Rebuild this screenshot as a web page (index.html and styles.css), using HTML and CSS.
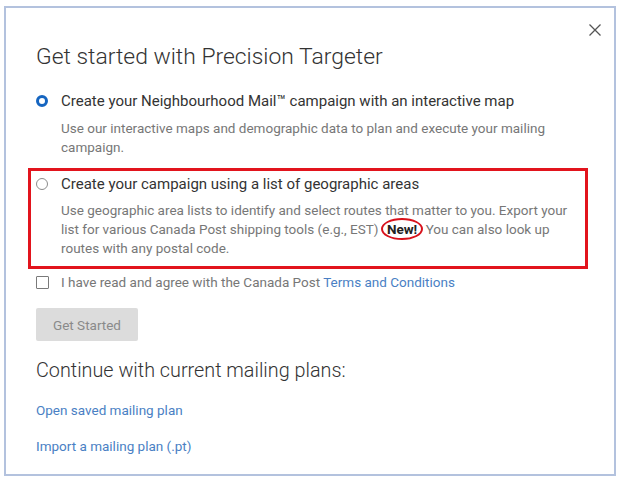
FILE: index.html
```html
<!DOCTYPE html>
<html lang="en">
<head>
<meta charset="utf-8">
<title>Get started with Precision Targeter</title>
<link rel="stylesheet" href="styles.css">
</head>
<body>
<div class="dialog">
  <div class="close-row">
    <button class="close" aria-label="Close">
      <svg width="12" height="12" viewBox="0 0 12 12"><path d="M0.5 0.5 L11.5 11.5 M11.5 0.5 L0.5 11.5" stroke="#555" stroke-width="1.3" fill="none"/></svg>
    </button>
  </div>
  <h1 class="title">Get started with Precision Targeter</h1>

  <div class="option option-first">
    <div class="option-head">
      <span class="radio radio-on"></span>
      <span class="label">Create your Neighbourhood Mail™ campaign with an interactive map</span>
    </div>
    <p class="desc">Use our interactive maps and demographic data to plan and execute your mailing campaign.</p>
  </div>

  <div class="option option-marked">
    <div class="option-head">
      <span class="radio"></span>
      <span class="label">Create your campaign using a list of geographic areas</span>
    </div>
    <p class="desc">Use geographic area lists to identify and select routes that matter to you. Export your list for various Canada Post shipping tools (e.g., EST) <span class="new">New!</span> You can also look up routes with any postal code.</p>
  </div>

  <div class="agree">
    <span class="checkbox"></span>
    <span>I have read and agree with the Canada Post <a class="link" href="#">Terms and Conditions</a></span>
  </div>

  <button class="start">Get Started</button>

  <h2 class="subtitle">Continue with current mailing plans:</h2>
  <a class="link plan-link first-link" href="#">Open saved mailing plan</a>
  <a class="link plan-link" href="#">Import a mailing plan (.pt)</a>
</div>
</body>
</html>
```

FILE: styles.css
```css
html, body {
  margin: 0;
  padding: 0;
  background: #ffffff;
}
body {
  padding: 6px 8px 6px 4px;
  font-family: Roboto, "Liberation Sans", sans-serif;
}
.dialog {
  box-sizing: border-box;
  width: 612px;
  height: 470px;
  border: 2px solid #b3c2de;
  padding: 16px 13px 0 30px;
  display: flex;
  flex-direction: column;
  align-items: flex-start;
}
.close-row {
  align-self: stretch;
  display: flex;
  justify-content: flex-end;
  height: 12px;
}
.close {
  border: 0;
  background: none;
  padding: 0;
  width: 12px;
  height: 12px;
  display: block;
}
.close svg { display: block; }
.title {
  margin: 6px 0 0;
  font-size: 22.9px;
  line-height: 30px;
  font-weight: 300;
  color: #333333;
}
.option {
  display: flex;
  flex-direction: column;
}
.option-first {
  margin-top: 19px;
}
.option-head {
  display: flex;
  align-items: center;
  gap: 13px;
}
.label {
  font-size: 15px;
  line-height: 20px;
  color: #333333;
}
.radio {
  box-sizing: border-box;
  width: 12px;
  height: 12px;
  border-radius: 50%;
  border: 1px solid #8c8c8c;
  flex: none;
}
.radio-on {
  border: 3.5px solid #1565c0;
  background: #ffffff;
}
.desc {
  margin: 8px 0 0 25px;
  font-size: 13.5px;
  line-height: 19px;
  color: #777777;
  max-width: 516px;
}
.option-marked {
  margin: 11px 0 0 -8px;
  width: 560px;
  box-sizing: border-box;
  border: 3px solid #e2141d;
  padding: 3px 5px 8px 5px;
}
.option-marked .desc {
  margin-top: 7px;
}
.new {
  font-weight: 700;
  color: #222222;
  border: 2px solid #d8121c;
  border-radius: 50%;
  padding: 1px 4px;
  margin: 0 -1px;
}
.agree {
  margin-top: 3px;
  display: flex;
  align-items: center;
  gap: 12px;
  font-size: 13.5px;
  line-height: 20px;
  color: #777777;
}
.checkbox {
  box-sizing: border-box;
  width: 13px;
  height: 13px;
  border: 1.5px solid #7a7a7a;
  border-radius: 1px;
  flex: none;
}
.link {
  color: #4a7fc4;
  text-decoration: none;
}
.start {
  margin-top: 16px;
  width: 102px;
  height: 33px;
  border: 0;
  border-radius: 2px;
  background: #dcdcdc;
  color: #8a8a8a;
  font-family: Roboto, "Liberation Sans", sans-serif;
  font-size: 13.5px;
  padding: 0;
}
.subtitle {
  margin: 16px 0 0;
  font-size: 19.8px;
  line-height: 28px;
  font-weight: 300;
  color: #333333;
}
.plan-link {
  font-size: 13.5px;
  line-height: 18px;
  margin-top: 18px;
}
.first-link {
  margin-top: 16px;
}
```
